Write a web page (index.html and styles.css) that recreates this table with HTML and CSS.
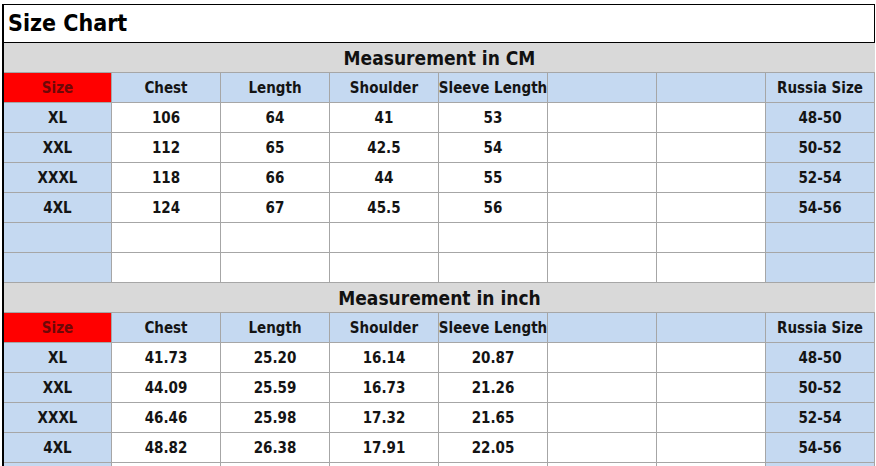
FILE: index.html
```html
<!DOCTYPE html>
<html>
<head>
<meta charset="utf-8">
<link rel="stylesheet" href="styles.css">
</head>
<body>
<div class="sheet">
  <div class="title">Size Chart</div>

  <div class="section">Measurement in CM</div>
  <div class="c red">Size</div><div class="c blue">Chest</div><div class="c blue">Length</div><div class="c blue">Shoulder</div><div class="c blue">Sleeve Length</div><div class="c blue"></div><div class="c blue"></div><div class="c blue">Russia Size</div>
  <div class="c blue">XL</div><div class="c">106</div><div class="c">64</div><div class="c">41</div><div class="c">53</div><div class="c"></div><div class="c"></div><div class="c blue">48-50</div>
  <div class="c blue">XXL</div><div class="c">112</div><div class="c">65</div><div class="c">42.5</div><div class="c">54</div><div class="c"></div><div class="c"></div><div class="c blue">50-52</div>
  <div class="c blue">XXXL</div><div class="c">118</div><div class="c">66</div><div class="c">44</div><div class="c">55</div><div class="c"></div><div class="c"></div><div class="c blue">52-54</div>
  <div class="c blue">4XL</div><div class="c">124</div><div class="c">67</div><div class="c">45.5</div><div class="c">56</div><div class="c"></div><div class="c"></div><div class="c blue">54-56</div>
  <div class="c blue"></div><div class="c"></div><div class="c"></div><div class="c"></div><div class="c"></div><div class="c"></div><div class="c"></div><div class="c blue"></div>
  <div class="c blue"></div><div class="c"></div><div class="c"></div><div class="c"></div><div class="c"></div><div class="c"></div><div class="c"></div><div class="c blue"></div>

  <div class="section">Measurement in inch</div>
  <div class="c red">Size</div><div class="c blue">Chest</div><div class="c blue">Length</div><div class="c blue">Shoulder</div><div class="c blue">Sleeve Length</div><div class="c blue"></div><div class="c blue"></div><div class="c blue">Russia Size</div>
  <div class="c blue">XL</div><div class="c">41.73</div><div class="c">25.20</div><div class="c">16.14</div><div class="c">20.87</div><div class="c"></div><div class="c"></div><div class="c blue">48-50</div>
  <div class="c blue">XXL</div><div class="c">44.09</div><div class="c">25.59</div><div class="c">16.73</div><div class="c">21.26</div><div class="c"></div><div class="c"></div><div class="c blue">50-52</div>
  <div class="c blue">XXXL</div><div class="c">46.46</div><div class="c">25.98</div><div class="c">17.32</div><div class="c">21.65</div><div class="c"></div><div class="c"></div><div class="c blue">52-54</div>
  <div class="c blue">4XL</div><div class="c">48.82</div><div class="c">26.38</div><div class="c">17.91</div><div class="c">22.05</div><div class="c"></div><div class="c"></div><div class="c blue">54-56</div>
  <div class="c blue"></div><div class="c"></div><div class="c"></div><div class="c"></div><div class="c"></div><div class="c"></div><div class="c"></div><div class="c blue"></div>
</div>
</body>
</html>
```

FILE: styles.css
```css
html, body {
  margin: 0;
  padding: 0;
  background: #ffffff;
  overflow: hidden;
}

body {
  padding: 4px 0 0 2px;
  font-family: "DejaVu Sans Condensed", "DejaVu Sans", sans-serif;
  font-weight: bold;
  color: #141414;
}

.sheet {
  display: grid;
  grid-template-columns: 108px repeat(7, 109px);
  grid-template-rows: 39px;
  grid-auto-rows: 30px;
  border-left: 2px solid #000;
  width: max-content;
}

.title {
  grid-column: 1 / -1;
  box-sizing: border-box;
  border-top: 1px solid #000;
  border-right: 1px solid #000;
  border-bottom: 1px solid #000;
  font-size: 23px;
  display: flex;
  align-items: center;
  padding-left: 4px;
  padding-bottom: 1px;
  color: #000;
}

.section {
  grid-column: 1 / -1;
  box-sizing: border-box;
  background: #d9d9d9;
  border-bottom: 1px solid #a6a6a6;
  font-size: 19px;
  display: flex;
  align-items: center;
  justify-content: center;
  color: #111;
}

.c {
  box-sizing: border-box;
  border-right: 1px solid #a6a6a6;
  border-bottom: 1px solid #a6a6a6;
  font-size: 15px;
  white-space: nowrap;
  display: flex;
  align-items: center;
  justify-content: center;
  background: #ffffff;
}

.blue {
  background: #c5d9f1;
}

.red {
  background: #ff0000;
  color: #6e0808;
}
```
